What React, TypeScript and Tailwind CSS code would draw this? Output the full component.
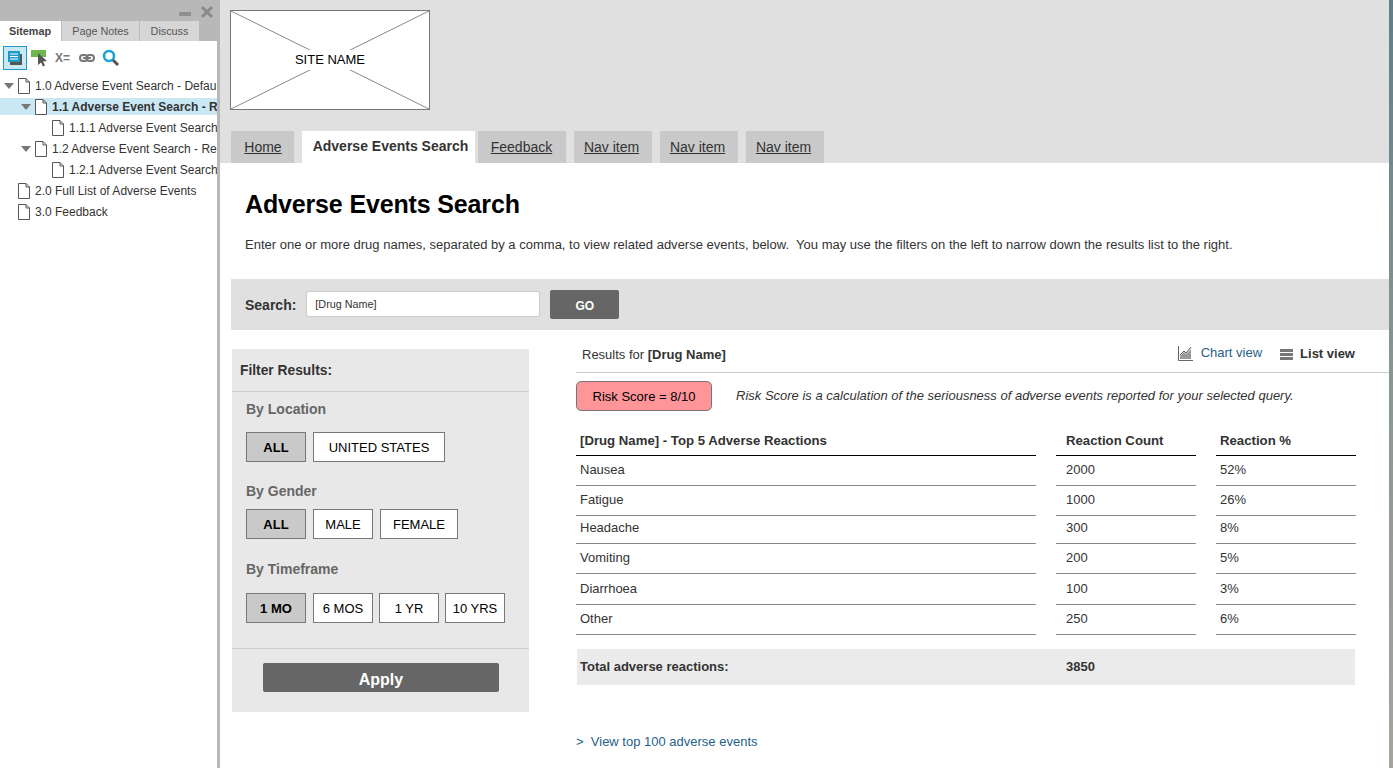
import React from 'react'

const font = "font-['Liberation_Sans',Arial,sans-serif]"

const PageIcon = () => (
  <svg width="12" height="16" viewBox="0 0 12 16" className="shrink-0">
    <path d="M0.5 0.5H8L11.5 4V15.5H0.5Z M8 0.5V4H11.5" fill="#fff" stroke="#555" strokeWidth="1" />
  </svg>
)

const Caret = () => (
  <svg width="10" height="6" viewBox="0 0 10 6" className="shrink-0">
    <path d="M0 0H10L5 6Z" fill="#777" />
  </svg>
)

const sitemap = [
  { label: '1.0 Adverse Event Search - Defau', indent: 'pl-[4px]', caret: true },
  { label: '1.1 Adverse Event Search - R', indent: 'pl-[21px]', caret: true, active: true },
  { label: '1.1.1 Adverse Event Search', indent: 'pl-[52px]' },
  { label: '1.2 Adverse Event Search - Re', indent: 'pl-[21px]', caret: true },
  { label: '1.2.1 Adverse Event Search', indent: 'pl-[52px]' },
  { label: '2.0 Full List of Adverse Events', indent: 'pl-[18px]' },
  { label: '3.0 Feedback', indent: 'pl-[18px]' },
]

const Sidebar = () => (
  <aside className="w-[220px] shrink-0 h-[768px] overflow-hidden bg-white border-r-[3px] border-[#b8b8b8] flex flex-col">
    <div className="h-[21px] bg-[#b8b8b8] flex items-start justify-end gap-[9px] pr-[3px] pt-[5px]">
      <div className="w-[12px] h-[4px] bg-[#8f8f8f] mt-[7px]"></div>
      <svg width="14" height="14" viewBox="0 0 14 14">
        <path d="M2 2L12 12M12 2L2 12" stroke="#8a8a8a" strokeWidth="3" />
      </svg>
    </div>
    <div className="h-[20px] bg-[#b8b8b8] flex text-[10.8px] text-[#555]">
      <div className="w-[61px] bg-white font-bold flex items-center justify-center text-[#444] pr-[1px]">Sitemap</div>
      <div className="w-[78px] bg-[#d6d6d6] border-l border-[#bbb] flex items-center justify-center">Page Notes</div>
      <div className="w-[60px] bg-[#d6d6d6] border-l border-[#bbb] flex items-center justify-center">Discuss</div>
    </div>
    <div className="h-[34px] flex items-center pl-[3px]">
      <div className="w-[24px] h-[24px] bg-[#c9e8f4] border border-[#1a9bc9] flex items-center justify-center">
        <svg width="16" height="16" viewBox="0 0 16 16">
          <rect x="3" y="4" width="12" height="11" fill="#555" />
          <rect x="1" y="1" width="12" height="11" fill="#1a9bc9" />
          <path d="M3 4H11M3 6.500H11M3 9H11" stroke="#fff" strokeWidth="1" />
        </svg>
      </div>
      <svg width="18" height="20" viewBox="0 0 18 20" className="ml-[3px]">
        <rect x="1" y="2" width="15" height="7" fill="#6cb84f" />
        <path d="M8 5L8 17L11 14.500L13 18.500L15 17.500L13 13.500L17 13Z" fill="#555" />
      </svg>
      <span className="ml-[7px] text-[12px] font-bold text-[#777]">X=</span>
      <svg width="16" height="8" viewBox="0 0 16 8" className="ml-[9px]">
        <rect x="1" y="1" width="7.500" height="6" rx="3" fill="none" stroke="#777" strokeWidth="2" />
        <rect x="7.500" y="1" width="7.500" height="6" rx="3" fill="none" stroke="#777" strokeWidth="2" />
        <path d="M4 4H12" stroke="#777" strokeWidth="2" />
      </svg>
      <svg width="18" height="18" viewBox="0 0 18 18" className="ml-[7px]">
        <circle cx="7" cy="7" r="5" fill="none" stroke="#12a5d6" strokeWidth="2.500" />
        <path d="M11 11L16 16" stroke="#555" strokeWidth="3" />
      </svg>
    </div>
    <div className="text-[12px] text-[#333]">
      {sitemap.map((row) => (
        <div key={row.label} className="py-[2px]">
          <div
            className={`h-[17px] flex items-center whitespace-nowrap overflow-hidden ${row.indent} ${row.active ? 'bg-[#c9e8f4] font-bold' : ''}`}
          >
            {row.caret && <span className="mr-[4px] flex"><Caret /></span>}
            <PageIcon />
            <span className="ml-[5px]">{row.label}</span>
          </div>
        </div>
      ))}
    </div>
  </aside>
)

const navItems = [
  { label: 'Home', w: 'w-[63px] mr-[8px]', pad: 'pl-[1px]' },
  { label: 'Adverse Events Search', w: 'w-[173px] mr-[3px]', pad: 'pl-[4px] pb-[2px]', active: true },
  { label: 'Feedback', w: 'w-[88px] mr-[8px]', pad: 'pr-[1px]' },
  { label: 'Nav item', w: 'w-[78px] mr-[8px]', pad: 'pr-[3px]' },
  { label: 'Nav item', w: 'w-[78px] mr-[8px]', pad: 'pr-[3px]' },
  { label: 'Nav item', w: 'w-[78px]', pad: 'pr-[3px]' },
]

const Header = () => (
  <header className="h-[163px] bg-[#e0e0e0] pl-[10px] pt-[10px] flex flex-col">
    <div className="w-[200px] h-[100px] relative bg-white border border-[#777] flex items-center justify-center">
      <svg className="absolute inset-0 w-full h-full" viewBox="0 0 198 98" preserveAspectRatio="none">
        <path d="M0 0L198 98M198 0L0 98" stroke="#888" strokeWidth="1" />
      </svg>
      <span className="relative bg-white px-[3px] text-[13px] text-black">SITE NAME</span>
    </div>
    <nav className="flex mt-[21px] h-[32px] pl-[1px]">
      {navItems.map((item, i) => (
        <div
          key={i}
          className={`${item.w} ${item.pad} flex items-center justify-center text-[14px] text-[#333] ${
            item.active ? 'bg-white font-bold' : 'bg-[#c9c9c9] underline'
          }`}
        >
          {item.label}
        </div>
      ))}
    </nav>
  </header>
)

const FilterButton = ({ label, w, active }: { label: string; w: string; active?: boolean }) => (
  <div
    className={`${w} h-[30px] pt-[1px] border border-[#777] flex items-center justify-center text-[13px] text-black ${
      active ? 'bg-[#c9c9c9] font-bold' : 'bg-white'
    }`}
  >
    {label}
  </div>
)

const Filters = () => (
  <div className="w-[297px] h-[363px] ml-[2px] mt-[19px] shrink-0 bg-[#e8e8e8] flex flex-col">
    <div className="h-[43px] border-b border-[#ccc] flex items-center pl-[8px] pt-[3px] text-[13.8px] font-bold text-[#333]">Filter Results:</div>
    <div className="pl-[14px] flex flex-col">
      <div className="mt-[9px] text-[14px] leading-[16px] font-bold text-[#666]">By Location</div>
      <div className="flex gap-[7px] mt-[15px]">
        <FilterButton label="ALL" w="w-[60px]" active />
        <FilterButton label="UNITED STATES" w="w-[132px]" />
      </div>
      <div className="mt-[21px] text-[14px] leading-[16px] font-bold text-[#666]">By Gender</div>
      <div className="flex gap-[7px] mt-[10px]">
        <FilterButton label="ALL" w="w-[60px]" active />
        <FilterButton label="MALE" w="w-[60px]" />
        <FilterButton label="FEMALE" w="w-[78px]" />
      </div>
      <div className="mt-[22px] text-[14px] leading-[16px] font-bold text-[#666]">By Timeframe</div>
      <div className="flex mt-[16px]">
        <FilterButton label="1 MO" w="w-[60px] mr-[7px]" active />
        <FilterButton label="6 MOS" w="w-[60px] mr-[6px]" />
        <FilterButton label="1 YR" w="w-[60px] mr-[6px]" />
        <FilterButton label="10 YRS" w="w-[60px]" />
      </div>
    </div>
    <div className="mt-[25px] border-t border-[#ccc] pt-[14px] flex justify-center pl-[1px]">
      <div className="w-[236px] h-[29px] pt-[5px] rounded-[2px] bg-[#666] text-white font-bold text-[16px] flex items-center justify-center">Apply</div>
    </div>
  </div>
)

const reactions = [
  { name: 'Nausea', count: '2000', pct: '52%', h: 'h-[30px]', pb: 'pb-[1px]' },
  { name: 'Fatigue', count: '1000', pct: '26%', h: 'h-[30px]', pb: 'pb-[1px]' },
  { name: 'Headache', count: '300', pct: '8%', h: 'h-[28px]', pb: 'pb-[3px]' },
  { name: 'Vomiting', count: '200', pct: '5%', h: 'h-[30px]', pb: 'pb-[1px]' },
  { name: 'Diarrhoea', count: '100', pct: '3%', h: 'h-[31px]', pb: 'pb-[1px]' },
  { name: 'Other', count: '250', pct: '6%', h: 'h-[30px]', pb: 'pb-[1px]' },
]

const Results = () => (
  <div className="flex-1 ml-[47px] flex flex-col">
    <div className="h-[43px] border-b border-[#ccc] flex items-center text-[13px] text-[#333] pl-[6px] pt-[6px]">
      <span className="pt-[2px]">
        Results for <b>[Drug Name]</b>
      </span>
      <div className="ml-auto flex items-center pr-[34px]">
        <svg width="15" height="16" viewBox="0 0 15 16" className="mb-[2px]">
          <path d="M0.500 1V15.500H15" fill="none" stroke="#666" strokeWidth="1" />
          <path d="M2 14V11L6 7L8 9L13 4V14Z" fill="#999" />
          <path d="M2 10L6 6L8 8L13 2" fill="none" stroke="#555" strokeWidth="1" />
        </svg>
        <span className="ml-[8px] mb-[2px] text-[#1f5f8b]">Chart view</span>
        <div className="ml-[18px] w-[13px] h-[11px] flex flex-col justify-between">
          <div className="h-[3px] bg-[#777]"></div>
          <div className="h-[3px] bg-[#777]"></div>
          <div className="h-[3px] bg-[#777]"></div>
        </div>
        <b className="ml-[7px]">List view</b>
      </div>
    </div>
    <div className="flex items-center mt-[8px]">
      <div className="w-[136px] h-[30px] pt-[1px] rounded-[5px] bg-[#ff9499] border border-[#777] flex items-center justify-center text-[13px] text-black">Risk Score = 8/10</div>
      <i className="ml-[24px] text-[13px] text-[#333]">Risk Score is a calculation of the seriousness of adverse events reported for your selected query.</i>
    </div>
    <div className="w-[780px] mt-[14px] text-[13px] text-[#333]">
      <div className="flex h-[31px] font-bold text-[13.2px]">
        <div className="w-[460px] pl-[4px] pt-[6px] border-b border-black">[Drug Name] - Top 5 Adverse Reactions</div>
        <div className="w-[140px] ml-[20px] pl-[10px] pt-[6px] border-b border-black">Reaction Count</div>
        <div className="w-[140px] ml-[20px] pl-[4px] pt-[6px] border-b border-black">Reaction %</div>
      </div>
      {reactions.map((row) => (
        <div key={row.name} className={`flex ${row.h}`}>
          <div className={`w-[460px] pl-[4px] ${row.pb} flex items-center border-b border-[#888]`}>{row.name}</div>
          <div className={`w-[140px] ml-[20px] pl-[10px] ${row.pb} flex items-center border-b border-[#888]`}>{row.count}</div>
          <div className={`w-[140px] ml-[20px] pl-[4px] ${row.pb} flex items-center border-b border-[#888]`}>{row.pct}</div>
        </div>
      ))}
      <div className="w-[778px] h-[36px] mt-[14px] ml-[1px] bg-[#ebebeb] flex items-center font-bold">
        <div className="w-[489px] pl-[3px]">Total adverse reactions:</div>
        <div>3850</div>
      </div>
    </div>
    <div className="mt-[47px] text-[13px] text-[#1f5f8b]">
      &gt;&nbsp; View top 100 adverse events
    </div>
  </div>
)

const App = () => {
  return (
    <div className={`flex w-[1393px] h-[768px] overflow-hidden bg-white ${font}`}>
      <Sidebar />
      <main className="flex-1 min-w-0 flex flex-col">
        <Header />
        <div className="pl-[25px] pt-[26px]">
          <h1 className="text-[25px] leading-[30px] font-bold tracking-[-0.15px] text-black">Adverse Events Search</h1>
          <p className="mt-[18px] text-[13.03px] leading-[16px] text-[#333] whitespace-pre">
            {'Enter one or more drug names, separated by a comma, to view related adverse events, below.  You may use the filters on the left to narrow down the results list to the right.'}
          </p>
        </div>
        <div className="h-[51px] mt-[26px] ml-[11px] bg-[#e0e0e0] flex items-center pl-[14px]">
          <span className="pt-[2px] text-[14px] font-bold text-[#333]">Search:</span>
          <div className="ml-[10px] mb-[1px] w-[234px] h-[26px] bg-white rounded-[2px] border border-[#ccc] flex items-center pl-[8px] text-[10.8px] text-[#333]">[Drug Name]</div>
          <div className="ml-[10px] pt-[2px] w-[69px] h-[29px] rounded-[2px] bg-[#666] text-white text-[12px] font-bold flex items-center justify-center">GO</div>
        </div>
        <div className="flex ml-[10px]">
          <Filters />
          <Results />
        </div>
      </main>
      <div className="w-[4px] shrink-0 bg-gradient-to-b from-[#5f7f86] via-[#8b9692] to-[#a5a59d]"></div>
    </div>
  )
}

export default App
